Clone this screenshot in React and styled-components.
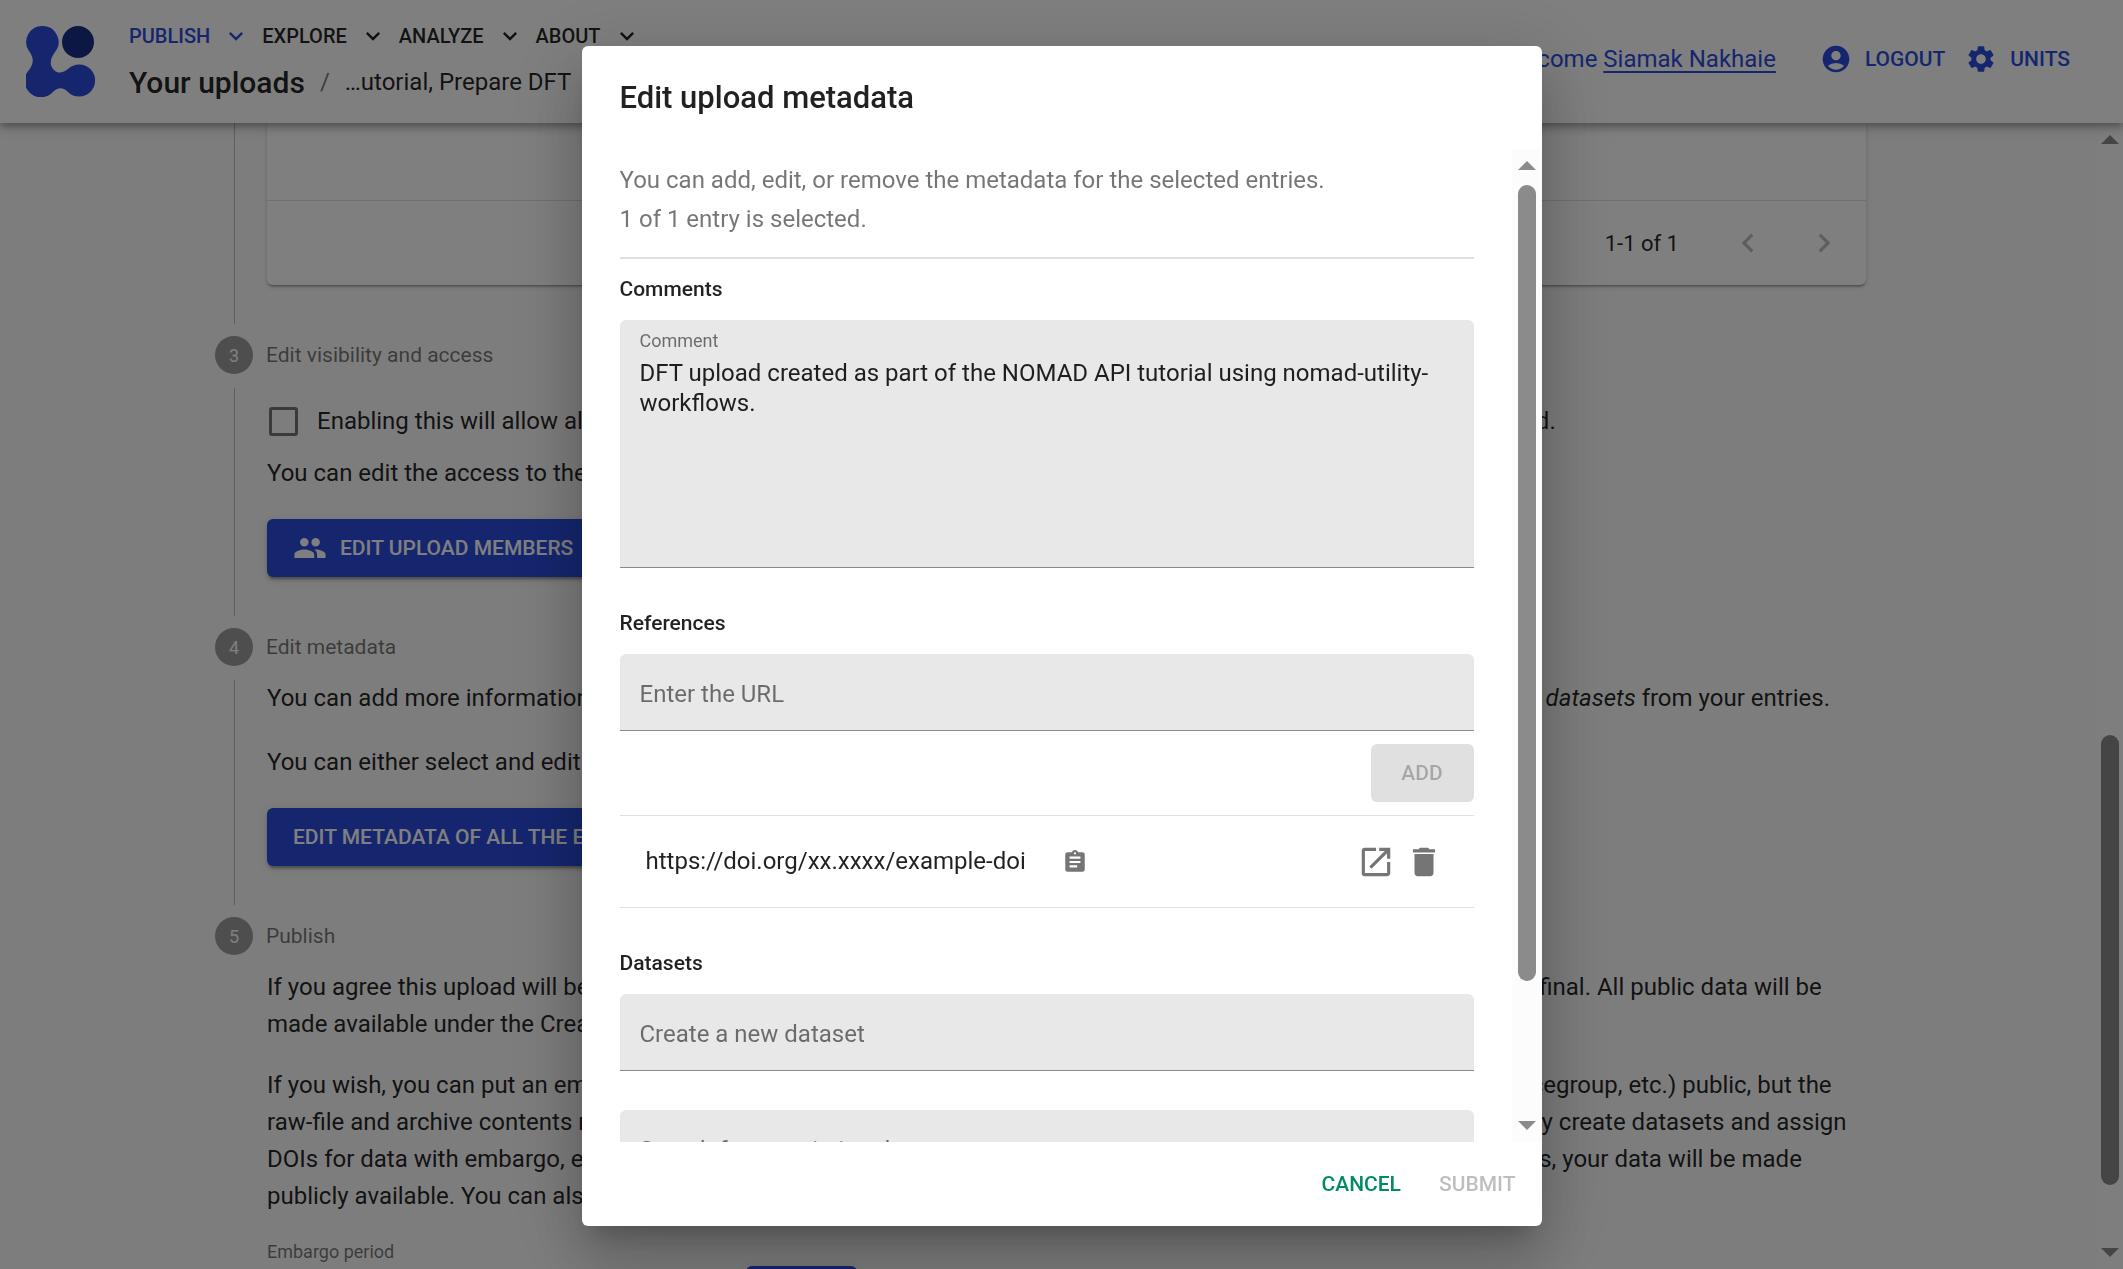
import React, { useState } from "react"
import styled, { createGlobalStyle } from "styled-components"
import {
  MdAccountCircle,
  MdAssignment,
  MdChevronLeft,
  MdChevronRight,
  MdDelete,
  MdExpandMore,
  MdGroup,
  MdOpenInNew,
  MdSettings,
} from "react-icons/md"

const primary = "#2a4cdf"
const textPrimary = "rgba(0, 0, 0, 0.87)"
const textSecondary = "rgba(0, 0, 0, 0.54)"

const GlobalStyle = createGlobalStyle`
  *, *::before, *::after {
    box-sizing: border-box;
  }

  body {
    margin: 0;
    background: #fafafa;
    color: ${textPrimary};
    font-family: Roboto, "Liberation Sans", sans-serif;
    font-size: 24px;
    line-height: 37px;
  }

  button, input, textarea, select {
    font: inherit;
    color: inherit;
  }

  svg {
    display: block;
    flex-shrink: 0;
  }
`

const Page = styled.div`
  display: flex;
  flex-direction: column;
  height: 100vh;
  overflow: hidden;
`

const Header = styled.header`
  position: relative;
  z-index: 1;
  display: flex;
  justify-content: space-between;
  flex-shrink: 0;
  height: 123px;
  padding: 16px 53px 0 26px;
  background: #fff;
  box-shadow: 0 3px 6px -1px rgba(0, 0, 0, 0.2), 0 6px 8px rgba(0, 0, 0, 0.14),
    0 2px 16px rgba(0, 0, 0, 0.12);
`

const Brand = styled.div`
  display: flex;
  gap: 34px;

  > svg {
    margin-top: 10px;
  }
`

const Nav = styled.nav`
  display: flex;
  gap: 12px;
`

const NavButton = styled.button`
  display: flex;
  align-items: center;
  gap: 12px;
  padding: 0;
  border: 0;
  background: none;
  color: ${({ $active }) => ($active ? primary : textPrimary)};
  font-size: 20px;
  font-weight: 500;
  line-height: 40px;
  text-transform: uppercase;
`

const Breadcrumbs = styled.div`
  display: flex;
  align-items: center;
  gap: 15px;
  margin-top: 8px;
  white-space: nowrap;
`

const Crumb = styled.a`
  color: inherit;
  font-size: 30px;
  font-weight: 500;
  text-decoration: none;
`

const Muted = styled.span`
  color: ${textSecondary};
`

const Account = styled.div`
  display: flex;
  align-items: center;
  height: 86px;
  color: ${primary};
  white-space: nowrap;

  a {
    color: inherit;
    text-underline-offset: 4px;
  }
`

const AccountButton = styled.button`
  display: flex;
  align-items: center;
  gap: 13px;
  margin-left: ${({ $first }) => ($first ? "44px" : "20px")};
  padding: 0;
  border: 0;
  background: none;
  font-size: 21px;
  font-weight: 500;
  text-transform: uppercase;
`

const Body = styled.div`
  display: flex;
  flex: 1;
  min-height: 0;
`

const Content = styled.main`
  flex: 1;
  min-width: 0;
  padding: 0 231px 0 215px;
  overflow: hidden;
`

const StepHead = styled.div`
  display: flex;
  align-items: center;
  gap: 13px;
  margin: 12px 0 14px;
  color: ${textSecondary};
  font-size: 21px;
`

const StepNumber = styled.span`
  display: flex;
  align-items: center;
  justify-content: center;
  width: 38px;
  height: 38px;
  border-radius: 50%;
  background: #9c9c9c;
  color: #fff;
  font-size: 18px;
`

const StepBody = styled.div`
  margin-left: 19px;
  padding: 0 0 39px 32px;
  border-left: 1px solid ${({ $last }) => ($last ? "transparent" : "#bdbdbd")};
`

const Paper = styled.div`
  border-radius: 0 0 6px 6px;
  background: #fff;
  box-shadow: 0 3px 2px -2px rgba(0, 0, 0, 0.2), 0 2px 2px rgba(0, 0, 0, 0.14),
    0 2px 5px rgba(0, 0, 0, 0.12);
`

const PaperRow = styled.div`
  height: 78px;
  border-bottom: 1px solid #e0e0e0;
`

const Pagination = styled.div`
  display: flex;
  align-items: center;
  justify-content: flex-end;
  gap: 38px;
  height: 84px;
  padding-right: 23px;
  font-size: 22px;

  span {
    padding-right: 12px;
  }
`

const IconButton = styled.button`
  display: flex;
  padding: 0;
  border: 0;
  background: none;
  color: ${textSecondary};

  &:disabled {
    color: rgba(0, 0, 0, 0.26);
  }
`

const CheckRow = styled.label`
  display: flex;
  align-items: center;
  gap: 19px;
  padding: 15px 0 15px 2px;
  white-space: nowrap;
`

const Checkbox = styled.input`
  appearance: none;
  width: 29px;
  height: 29px;
  margin: 0;
  border: 3px solid #757575;
  border-radius: 3px;
`

const Paragraph = styled.p`
  margin: 0 0 ${({ $tight }) => ($tight ? "24px" : "27px")};
`

const Line = styled.span`
  display: block;
  white-space: nowrap;
`

const Button = styled.button`
  display: flex;
  align-items: center;
  justify-content: center;
  gap: 13px;
  width: ${({ $width }) => ($width ? `${$width}px` : "auto")};
  height: 58px;
  padding: 0 26px;
  border: 0;
  border-radius: 6px;
  background: ${primary};
  color: #fff;
  box-shadow: 0 5px 2px -3px rgba(0, 0, 0, 0.2), 0 3px 3px rgba(0, 0, 0, 0.14),
    0 2px 8px rgba(0, 0, 0, 0.12);
  font-size: 21px;
  font-weight: 500;
  text-transform: uppercase;
  white-space: nowrap;

  &:disabled {
    background: #e0e0e0;
    color: rgba(0, 0, 0, 0.26);
    box-shadow: none;
  }
`

const EmbargoRow = styled.div`
  display: flex;
  align-items: flex-end;
  gap: 16px;
  margin-top: -2px;
`

const EmbargoField = styled.label`
  width: 463px;
  color: ${textSecondary};
  font-size: 18px;
  line-height: 30px;

  select {
    display: block;
    width: 100%;
    height: 57px;
    border: 0;
    border-bottom: 1px solid #8a8a8a;
    background: none;
  }
`

const Track = styled.div`
  display: flex;
  flex-direction: column;
  align-items: center;
  flex-shrink: 0;
  width: ${({ $width }) => $width}px;
  padding: 12px 0;
  background: #fcfcfc;
`

const Arrow = styled.span`
  border: 9px solid transparent;
  border-top-width: ${({ $up }) => ($up ? 0 : 9)}px;
  border-bottom-width: ${({ $up }) => ($up ? 9 : 0)}px;
  border-top-color: #8b8b8b;
  border-bottom-color: #8b8b8b;
`

const Rail = styled.div`
  display: flex;
  flex: 1;
  flex-direction: column;
  width: 18px;
  margin: 15px 0;
`

const Thumb = styled.div`
  border-radius: 9px;
  background: #8b8b8b;
`

const Overlay = styled.div`
  position: fixed;
  inset: 0;
  z-index: 2;
  display: flex;
  justify-content: center;
  padding: 46px 32px 43px;
  background: rgba(0, 0, 0, 0.5);
`

const Dialog = styled.section`
  display: flex;
  flex-direction: column;
  width: 100%;
  max-width: 960px;
  border-radius: 6px;
  background: #fff;
  box-shadow: 0 18px 24px -11px rgba(0, 0, 0, 0.2),
    0 38px 61px 5px rgba(0, 0, 0, 0.14), 0 14px 74px 13px rgba(0, 0, 0, 0.12);
`

const DialogTitle = styled.h2`
  margin: 0;
  padding: 32px 38px 31px;
  font-size: 31px;
  font-weight: 500;
  line-height: 40px;
`

const DialogScroll = styled.div`
  display: flex;
  flex: 1;
  min-height: 0;
`

const DialogContent = styled.div`
  flex: 1;
  min-width: 0;
  padding: 12px 38px 0;
  overflow: hidden;
`

const Intro = styled.p`
  margin: 0;
  padding-bottom: 18px;
  border-bottom: 2px solid #e0e0e0;
  color: ${textSecondary};
  line-height: 39px;
`

const Heading = styled.h3`
  margin: ${({ $first }) => ($first ? "15px" : "40px")} 0 16px;
  font-size: 21px;
  font-weight: 500;
  line-height: 30px;
`

const CommentBox = styled.div`
  display: flex;
  flex-direction: column;
  height: 248px;
  padding: 6px 20px 0;
  border-bottom: 1px solid #8a8a8a;
  border-radius: 6px 6px 0 0;
  background: #e8e8e8;

  label {
    color: ${textSecondary};
    font-size: 18px;
    line-height: 30px;
  }

  textarea {
    flex: 1;
    padding: 2px 0 0;
    border: 0;
    background: none;
    line-height: 30px;
    resize: none;
  }
`

const TextInput = styled.input`
  display: block;
  width: 100%;
  height: 77px;
  margin-bottom: ${({ $spaced }) => ($spaced ? "39px" : "0")};
  padding: 4px 20px 0;
  border: 0;
  border-bottom: 1px solid #8a8a8a;
  border-radius: 6px 6px 0 0;
  background: #e8e8e8;

  &::placeholder {
    color: ${textSecondary};
    opacity: 1;
  }
`

const AddRow = styled.div`
  display: flex;
  justify-content: flex-end;
  padding: 13px 0;
`

const Reference = styled.div`
  display: flex;
  align-items: center;
  height: 93px;
  padding: 0 31px 0 26px;
  border-top: 1px solid #e0e0e0;
  border-bottom: 1px solid #e0e0e0;

  span {
    margin-right: 36px;
  }
`

const RowActions = styled.div`
  display: flex;
  gap: 10px;
  margin-left: auto;
`

const DialogActions = styled.footer`
  display: flex;
  justify-content: flex-end;
  gap: 38px;
  height: 84px;
  padding-right: 26px;
`

const TextButton = styled.button`
  padding: 0;
  border: 0;
  background: none;
  color: #008a67;
  font-size: 21px;
  font-weight: 500;
  text-transform: uppercase;

  &:disabled {
    color: rgba(0, 0, 0, 0.26);
  }
`

const Logo = () => (
  <svg width="69" height="71" viewBox="0 0 69 71">
    <circle cx="52" cy="16" r="16" fill="#192e86" />
    <path
      fill={primary}
      d="M16 0a16 16 0 0 1 13 26c-6 8-5 14-1 18 4 4 9 3 14-1a16 16 0 1 1 0 23c-5-5-10-5-15 0a16 16 0 0 1-24-22c5-7 5-12 0-19A16 16 0 0 1 16 0z"
    />
  </svg>
)

const Scrollbar = ({ width, before, size, after }) => (
  <Track $width={width} aria-hidden="true">
    <Arrow $up />
    <Rail>
      <div style={{ flexGrow: before }} />
      <Thumb style={{ flexGrow: size }} />
      <div style={{ flexGrow: after }} />
    </Rail>
    <Arrow />
  </Track>
)

const Step = ({ number, label, last, children }) => (
  <>
    <StepHead>
      <StepNumber>{number}</StepNumber>
      {label}
    </StepHead>
    <StepBody $last={last}>{children}</StepBody>
  </>
)

const menus = ["Publish", "Explore", "Analyze", "About"]

const EditMetadataDialog = () => {
  const [comment, setComment] = useState(
    "DFT upload created as part of the NOMAD API tutorial using nomad-utility-workflows."
  )
  const [url, setUrl] = useState("")

  return (
    <Overlay>
      <Dialog role="dialog" aria-labelledby="dialog-title">
        <DialogTitle id="dialog-title">Edit upload metadata</DialogTitle>
        <DialogScroll>
          <DialogContent>
            <Intro>
              You can add, edit, or remove the metadata for the selected
              entries.
              <br />1 of 1 entry is selected.
            </Intro>
            <Heading $first>Comments</Heading>
            <CommentBox>
              <label htmlFor="comment">Comment</label>
              <textarea
                id="comment"
                value={comment}
                onChange={e => setComment(e.target.value)}
              />
            </CommentBox>
            <Heading>References</Heading>
            <TextInput
              aria-label="Enter the URL"
              placeholder="Enter the URL"
              value={url}
              onChange={e => setUrl(e.target.value)}
            />
            <AddRow>
              <Button $width={103} disabled={!url}>
                Add
              </Button>
            </AddRow>
            <Reference>
              <span>https://doi.org/xx.xxxx/example-doi</span>
              <IconButton aria-label="Copy">
                <MdAssignment size={26} />
              </IconButton>
              <RowActions>
                <IconButton aria-label="Open">
                  <MdOpenInNew size={38} />
                </IconButton>
                <IconButton aria-label="Delete">
                  <MdDelete size={38} />
                </IconButton>
              </RowActions>
            </Reference>
            <Heading>Datasets</Heading>
            <TextInput
              $spaced
              aria-label="Create a new dataset"
              placeholder="Create a new dataset"
            />
            <TextInput
              aria-label="Search for an existing dataset"
              placeholder="Search for an existing dataset"
            />
          </DialogContent>
          <Scrollbar width={30} before={0} size={796} after={125} />
        </DialogScroll>
        <DialogActions>
          <TextButton>Cancel</TextButton>
          <TextButton disabled>Submit</TextButton>
        </DialogActions>
      </Dialog>
    </Overlay>
  )
}

export default () => (
  <>
    <GlobalStyle />
    <Page>
      <Header>
        <Brand>
          <Logo />
          <div>
            <Nav>
              {menus.map((menu, index) => (
                <NavButton key={menu} $active={index === 0}>
                  {menu}
                  <MdExpandMore size={28} />
                </NavButton>
              ))}
            </Nav>
            <Breadcrumbs>
              <Crumb href="#uploads">Your uploads</Crumb>
              <Muted>/</Muted>
              <span>…utorial, Prepare DFT</span>
            </Breadcrumbs>
          </div>
        </Brand>
        <Account>
          <span>
            Welcome <a href="#account">Siamak Nakhaie</a>
          </span>
          <AccountButton $first>
            <MdAccountCircle size={32} />
            Logout
          </AccountButton>
          <AccountButton>
            <MdSettings size={32} />
            Units
          </AccountButton>
        </Account>
      </Header>
      <Body>
        <Content>
          <StepBody>
            <Paper>
              <PaperRow />
              <Pagination>
                <span>1-1 of 1</span>
                <IconButton disabled aria-label="Previous page">
                  <MdChevronLeft size={38} />
                </IconButton>
                <IconButton disabled aria-label="Next page">
                  <MdChevronRight size={38} />
                </IconButton>
              </Pagination>
            </Paper>
          </StepBody>
          <Step number="3" label="Edit visibility and access">
            <CheckRow>
              <Checkbox type="checkbox" />
              Enabling this will allow all users, including guests without any
              account, to view the upload even before it is published.
            </CheckRow>
            <Paragraph>
              You can edit the access to the upload members here.
            </Paragraph>
            <Button>
              <MdGroup size={34} />
              Edit upload members
            </Button>
          </Step>
          <Step number="4" label="Edit metadata">
            <Paragraph>
              <Line>
                You can add more information about your data, like{" "}
                <i>comments</i>, <i>references</i> (e.g. links to
                publications), and you can create <i>datasets</i> from your
                entries.
              </Line>
            </Paragraph>
            <Paragraph>
              You can either select and edit individual entries, or edit all.
            </Paragraph>
            <Button>Edit metadata of all the entries</Button>
          </Step>
          <Step number="5" label="Publish" last>
            <Paragraph $tight>
              <Line>
                If you agree this upload will be published, and move out of your
                private staging area into the public NOMAD. This step is final.
                All public data will be
              </Line>
              <Line>
                made available under the Creative Commons Attribution license
                (CC BY 4.0).
              </Line>
            </Paragraph>
            <Paragraph $tight>
              <Line>
                If you wish, you can put an embargo on your data. This makes
                some metadata (e.g. chemical formula, system type, spacegroup,
                etc.) public, but the
              </Line>
              <Line>
                raw-file and archive contents remain hidden (except for you, and
                users you explicitly share the data with). You can already
                create datasets and assign
              </Line>
              <Line>
                DOIs for data with embargo, e.g. to put them into your still
                unpublished paper or thesis. When the embargo period expires,
                your data will be made
              </Line>
              <Line>
                publicly available. You can also lift the embargo before the
                embargo period has expired.
              </Line>
            </Paragraph>
            <EmbargoRow>
              <EmbargoField>
                Embargo period
                <select>
                  <option>No embargo</option>
                </select>
              </EmbargoField>
              <Button $width={111}>Edit</Button>
            </EmbargoRow>
          </Step>
        </Content>
        <Scrollbar width={26} before={576} size={450} after={48} />
      </Body>
    </Page>
    <EditMetadataDialog />
  </>
)
